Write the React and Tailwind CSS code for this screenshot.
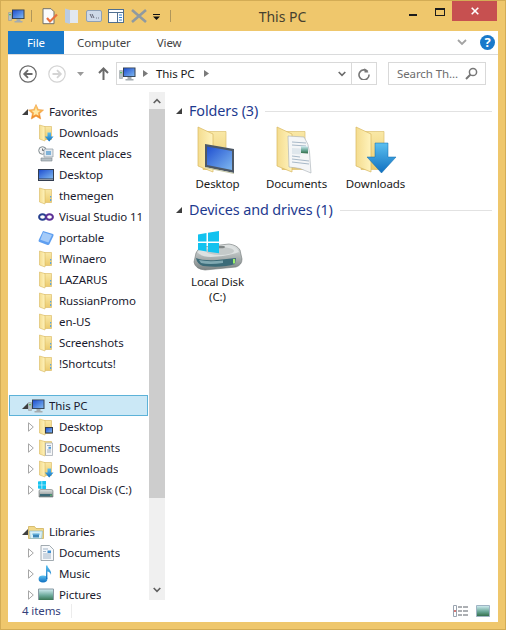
import React from 'react';

const Defs = () => (
  <svg className="absolute w-0 h-0">
    <defs>
      <linearGradient id="fold" x1="0" y1="0" x2="1" y2="0">
        <stop offset="0" stopColor="#f4dc8e" />
        <stop offset="1" stopColor="#fff3bd" />
      </linearGradient>
      <linearGradient id="back" x1="0" y1="0" x2="0" y2="1">
        <stop offset="0" stopColor="#f9e8a6" />
        <stop offset="1" stopColor="#eccb6e" />
      </linearGradient>
      <linearGradient id="scr" x1="0" y1="0" x2="1" y2="1">
        <stop offset="0" stopColor="#1f4fd0" />
        <stop offset="1" stopColor="#7fb8f0" />
      </linearGradient>
      <linearGradient id="arrow" x1="0" y1="0" x2="0" y2="1">
        <stop offset="0" stopColor="#5cc0f0" />
        <stop offset="1" stopColor="#0f6fc0" />
      </linearGradient>
      <linearGradient id="star" x1="0" y1="0" x2="0" y2="1">
        <stop offset="0" stopColor="#ffd87a" />
        <stop offset="1" stopColor="#f0801c" />
      </linearGradient>
      <linearGradient id="disk" x1="0" y1="0" x2="0" y2="1">
        <stop offset="0" stopColor="#dfe3e3" />
        <stop offset="1" stopColor="#7c8484" />
      </linearGradient>
      <linearGradient id="pic" x1="0" y1="0" x2="0" y2="1">
        <stop offset="0" stopColor="#d4eef4" />
        <stop offset="0.55" stopColor="#6aa898" />
        <stop offset="1" stopColor="#2f6b45" />
      </linearGradient>
    </defs>
  </svg>
);

const Folder = ({ children }) => (
  <svg width="16" height="18" viewBox="0 0 16 18" className="shrink-0">
    <path d="M6 2.5h7.5v13H6z" fill="url(#back)" stroke="#d8b65c" strokeWidth="0.6" />
    <path d="M1.5 1 L7 2.6 V17 L1.5 15z" fill="url(#fold)" stroke="#d9b860" strokeWidth="0.6" />
    {children}
  </svg>
);

const PlainFolder = () => (
  <Folder>
    <path d="M12 9h1.2v1.4H12zM12 12h1.2v2H12z" fill="#5aa6e0" />
  </Folder>
);

const FolderDown = () => (
  <Folder>
    <path d="M9.5 8.5h3.5v4h2.6L11.2 17.5 6.8 12.5h2.7z" fill="url(#arrow)" />
  </Folder>
);

const FolderDesk = () => (
  <Folder>
    <path d="M7 9h8v6.5H7z" fill="#333d4c" />
    <path d="M8 10h6v4.4H8z" fill="url(#scr)" />
  </Folder>
);

const FolderDoc = () => (
  <Folder>
    <path d="M7.5 4h7v12.5h-7z" fill="#f6f7f8" stroke="#8c949c" strokeWidth="0.6" />
    <path d="M9 6.5h4M9 11h4M9 13h4" stroke="#8a9aae" strokeWidth="0.8" />
    <path d="M10.5 7.8h2.5v2h-2.5z" fill="#4f9ad8" />
  </Folder>
);

const Pc = ({ className = '' }) => (
  <svg width="17" height="14" viewBox="0 0 17 14" className={`shrink-0 ${className}`}>
    <path d="M0.5 3.5h3v8h-3z" fill="#b8c0c4" stroke="#8c9498" strokeWidth="0.5" />
    <path d="M1.2 5h1.6v1.2H1.2z" fill="#3fc04c" />
    <path d="M4 0.5h12.5v9.5H4z" fill="#34404e" />
    <path d="M5 1.3h10.5v7.8H5z" fill="url(#scr)" />
    <path d="M8.5 10h4v2h2v1.5h-8V12h2z" fill="#a4acb0" />
  </svg>
);

const Star = () => (
  <svg width="16" height="16" viewBox="0 0 16 16" className="shrink-0">
    <path d="M8 0.5l2.3 5 5.2.6-3.9 3.5 1.1 5.4L8 12.2 3.3 15l1.1-5.4L.5 6.1l5.2-.6z" fill="url(#star)" stroke="#ef9a3c" strokeWidth="0.6" />
    <path d="M8 3.5l1.3 3 3 .3-2.2 2 .6 3L8 10.2l-2.7 1.6.6-3-2.2-2 3-.3z" fill="#ffe9a6" />
  </svg>
);

const Recent = () => (
  <svg width="16" height="16" viewBox="0 0 16 16" className="shrink-0">
    <circle cx="4.5" cy="4.5" r="3.8" fill="#f2f2f2" stroke="#7f8a8f" />
    <path d="M4.5 2.5v2h2" stroke="#4b5358" fill="none" strokeWidth="0.8" />
    <path d="M6 3h9v8H6z" fill="#e2e9ef" stroke="#8b979f" strokeWidth="0.7" />
    <path d="M8 5h5v4H8z" fill="#7fb2d8" />
    <path d="M3 12h11v3H3z" fill="#b7c0c6" stroke="#79848a" strokeWidth="0.6" />
  </svg>
);

const DeskSmall = () => (
  <svg width="16" height="14" viewBox="0 0 16 14" className="shrink-0">
    <path d="M0 1h16v12H0z" fill="#333d4f" />
    <path d="M1 2h14v8.5H1z" fill="url(#scr)" />
    <path d="M1 11h14v1H1z" fill="#8a94a2" />
  </svg>
);

const Vs = () => (
  <svg width="16" height="10" viewBox="0 0 16 10" className="shrink-0">
    <ellipse cx="4.5" cy="5" rx="3.4" ry="2.8" fill="none" stroke="#27408f" strokeWidth="2" />
    <ellipse cx="11.5" cy="5" rx="3.4" ry="2.8" fill="none" stroke="#5b2f96" strokeWidth="2" />
  </svg>
);

const Portable = () => (
  <svg width="16" height="16" viewBox="0 0 16 16" className="shrink-0">
    <path d="M5 1 L15 4 Q16 4.5 15.4 6 L11.5 14 Q11 15.4 9.5 15 L1.5 12 Q0 11.4 .7 10z" fill="#5f9ff0" />
    <path d="M5.2 2.2 L14 5 L10.4 12.5 L2.4 9.8z" fill="#a5cbf8" />
  </svg>
);

const Win = ({ s = 8 }) => (
  <svg width={s} height={s} viewBox="0 0 8 8" className="absolute top-0 left-0">
    <path d="M0 .6 3.6 0v3.7H0zM4.2 0 8 -.1v3.8H4.2zM0 4.3h3.6V8L0 7.5zM4.2 4.3H8V8.2L4.2 8z" fill="#16c4f0" />
  </svg>
);

const DiskSmall = () => (
  <span className="relative w-[16px] h-[18px] shrink-0">
    <Win s={8} />
    <svg width="16" height="18" viewBox="0 0 16 18" className="block">
      <path d="M1 10 Q1 8.5 3 8.5h10Q15 8.5 15 10v6H1z" fill="url(#disk)" stroke="#6a7272" strokeWidth="0.6" />
      <path d="M2 13h12v2.3H2z" fill="#3c6a78" />
      <path d="M12.5 13.5h1v1.4h-1z" fill="#7be36a" />
    </svg>
  </span>
);

const LibDoc = () => (
  <svg width="14" height="16" viewBox="0 0 14 16" className="shrink-0 ml-[1px]">
    <path d="M1 .5h8.5l4 4v11H1z" fill="#f7f9fb" stroke="#8b959d" strokeWidth="0.8" />
    <path d="M3 4h5M3 6.5h3M3 9h8M3 11h8M3 13h8" stroke="#8aa2bb" strokeWidth="0.8" />
    <path d="M7.5 5.5h3.5v2.5H7.5z" fill="#3d8fd0" />
  </svg>
);

const Music = () => (
  <svg width="16" height="18" viewBox="0 0 16 18" className="shrink-0">
    <ellipse cx="5" cy="14" rx="4.4" ry="3.4" fill="url(#arrow)" />
    <path d="M8 14V0.5h1.4C10 4 14 5 13 10 12.6 7.5 11 6.6 9.4 6.4V14z" fill="url(#arrow)" />
  </svg>
);

const Pics = () => (
  <svg width="16" height="14" viewBox="0 0 16 14" className="shrink-0">
    <path d="M.5 1h15v12H.5z" fill="url(#pic)" stroke="#8a9aa4" />
  </svg>
);

const Libraries = () => (
  <svg width="16" height="16" viewBox="0 0 16 16" className="shrink-0">
    <path d="M.5 2.5h6l1.5 2h7.5v10H.5z" fill="#f2d98a" stroke="#c9a94e" strokeWidth="0.7" />
    <path d="M1.5 7h13l-.8 7.5H2.3z" fill="#d8f0f7" stroke="#7fb3c9" strokeWidth="0.6" />
    <path d="M5 10.5h6v3H5z" fill="#3c86b8" />
    <path d="M4.5 9.5h7v1.4h-7z" fill="#5aa9d6" />
  </svg>
);

const Open = () => (
  <svg width="6" height="6" viewBox="0 0 6 6" className="shrink-0">
    <path d="M6 0v6H0z" fill="#3f3f3f" />
  </svg>
);

const Closed = () => (
  <svg width="6" height="10" viewBox="0 0 6 10" className="shrink-0">
    <path d="M.5 .8 5.3 5 .5 9.2z" fill="#fff" stroke="#a6a6a6" />
  </svg>
);

const Top = ({ icon, text, open = true, selected }) => (
  <div className={`flex items-center h-[21px] ${selected ? 'bg-[#cbe8f6] border border-[#5cb2d8] ml-[1px] mr-[1px] pl-[11px]' : 'pl-[13px]'}`}>
    <span className="w-[7px] flex justify-center">{open && <Open />}</span>
    <span className="w-[16px] flex justify-center">{icon}</span>
    <span className="ml-[5px] truncate">{text}</span>
  </div>
);

const Sub = ({ icon, text, arrow }) => (
  <div className="flex items-center h-[21px] pl-[20px]">
    <span className="w-[10px] flex justify-start">{arrow && <Closed />}</span>
    <span className="w-[16px] flex justify-center">{icon}</span>
    <span className="ml-[5px] truncate">{text}</span>
  </div>
);

const favorites = [
  [<FolderDown />, 'Downloads'],
  [<Recent />, 'Recent places'],
  [<DeskSmall />, 'Desktop'],
  [<PlainFolder />, 'themegen'],
  [<Vs />, 'Visual Studio 11'],
  [<Portable />, 'portable'],
  [<PlainFolder />, '!Winaero'],
  [<PlainFolder />, 'LAZARUS'],
  [<PlainFolder />, 'RussianPromo'],
  [<PlainFolder />, 'en-US'],
  [<PlainFolder />, 'Screenshots'],
  [<PlainFolder />, '!Shortcuts!'],
];

const BigFolder = ({ children }) => (
  <svg width="48" height="48" viewBox="5 0 48 48" className="block">
    <path d="M14 5.5h23v38H14z" fill="url(#back)" stroke="#dcc070" strokeWidth="0.7" />
    <path d="M9 1 L24 8 V46 L9 40z" fill="url(#fold)" stroke="#d9b860" strokeWidth="0.7" />
    {children}
  </svg>
);

const BigDesk = () => (
  <BigFolder>
    <path d="M16 18 L45 23 L45 47 L16 41z" fill="#4d5866" />
    <path d="M18 20.5 L43 25 L43 44 L18 39z" fill="url(#scr)" />
    <path d="M16 41 L45 47 L45 48 L16 42z" fill="#c6c8a8" />
  </BigFolder>
);

const BigDoc = () => (
  <BigFolder>
    <path d="M20 10 L36 11 Q41 18 41.5 26 L43 47 Q32 41 21 41z" fill="#f4f6f7" stroke="#a5adb3" strokeWidth="0.6" />
    <path d="M24 16l14 1M24 19l14 1M24 33l17 2M24 36l17 2M24 30l8 1" stroke="#93a8bb" strokeWidth="0.8" />
    <path d="M24 22l9 .5v6l-9-.5z" fill="#dfe7ec" />
    <path d="M33 20l7 .5v7l-7-.5z" fill="url(#pic)" />
  </BigFolder>
);

const BigDown = () => (
  <BigFolder>
    <path d="M28 18h13v14h8L34.5 48 20 32h8z" transform="translate(0 -1)" fill="url(#arrow)" stroke="#0f6aad" strokeWidth="0.5" />
  </BigFolder>
);

const BigDisk = () => (
  <svg width="50" height="41" viewBox="0 0 50 41" className="block">
    <path d="M3 22 Q4 18 10 16 L36 13 Q44 14 47 19 L49 28 Q49 34 43 36 L12 39 Q2 38 1 31z" fill="url(#disk)" stroke="#6f7676" strokeWidth="0.6" />
    <path d="M4 21 Q8 16 20 15 L37 14 Q44 16 46 21 Q36 25 18 26 Q8 26 4 21z" fill="#dde1e1" />
    <ellipse cx="27" cy="20" rx="14" ry="4" fill="#c4c9c9" />
    <ellipse cx="28" cy="16" rx="4" ry="1.3" fill="#7f8585" />
    <path d="M3 27 Q10 30 24 29 L43 27 L42 33 Q30 37 10 35 Q4 33 3 27z" fill="#3b6b78" />
    <path d="M6 29 Q14 31 30 29.5 L30 32 Q16 34 8 32z" fill="#80a9b2" />
    <path d="M40 28h2v4.5h-2z" fill="#9df06a" />
    <g fill="#12c2ef">
      <path d="M5 3.5 L13.5 2 V10.5 H5z" />
      <path d="M15 1.8 L26 0 V10.5 H15z" />
      <path d="M5 12 H13.5 V20.5 L5 19z" />
      <path d="M15 12 H26 V22.3 L15 20.8z" />
    </g>
  </svg>
);

const Item = ({ icon, label }) => (
  <div className="w-[79px] flex flex-col items-center text-center text-[#1a1a1a] leading-[15px]">
    {icon}
    <span className="mt-[2px] w-[66px]">{label}</span>
  </div>
);

const GroupHead = ({ text }) => (
  <div className="flex items-center h-[22px] pl-[5px]">
    <Open />
    <span className="ml-[7px] text-[14.4px] tracking-[-0.1px] text-[#1e3a8f]">{text}</span>
    <span className="ml-[7px] flex-1 h-px bg-[#e2e2e2]" />
  </div>
);

export default function App() {
  return (
    <div className="relative w-[506px] h-[630px] flex flex-col bg-[#efc76c] border border-[#d3ac55] overflow-hidden text-[11.5px] tracking-[-0.1px] text-[#1a1a2e] font-['Noto_Sans',sans-serif]">
      <Defs />
      {/* title bar */}
      <div className="flex h-[30px] shrink-0 items-start">
        <div className="flex items-center h-[30px] w-[174px] shrink-0 pl-[7px]">
          <Pc />
          <span className="ml-[6px] w-px h-[12px] bg-[#b0965a]" />
          <svg width="16" height="17" viewBox="0 0 16 17" className="ml-[10px]">
            <path d="M1 .7h8l3 3v12H1z" fill="#fbfbfb" stroke="#70706a" />
            <path d="M5 10l3 3.5 7-7" fill="none" stroke="#e86f3c" strokeWidth="2.2" />
          </svg>
          <svg width="14" height="16" viewBox="0 0 14 16" className="ml-[7px]">
            <path d="M5 2h8v13H5z" fill="#e2e8ef" />
            <path d="M0 .5l5 1.5v14L0 14.5z" fill="#b9cbe3" />
          </svg>
          <svg width="16" height="12" viewBox="0 0 16 12" className="ml-[7px]">
            <rect x=".5" y=".5" width="15" height="11" rx="1.5" fill="#ced9e8" stroke="#8fa0b5" />
            <path d="M4 4l2 4M6 4l2 4M10 8h.8M12 8h.8" stroke="#445" strokeWidth="0.8" />
          </svg>
          <svg width="16" height="14" viewBox="0 0 16 14" className="ml-[6px]">
            <rect x=".5" y=".5" width="15" height="13" fill="#fdfdfd" stroke="#4f6f90" />
            <path d="M.5 3.5h15M9.5 3.5v10" stroke="#4f6f90" />
            <path d="M11 6h3M11 8.5h3M11 11h3" stroke="#2e7fd0" />
          </svg>
          <svg width="16" height="14" viewBox="0 0 16 14" className="ml-[7px]">
            <path d="M1 1l14 12M15 1L1 13" stroke="#8f9aa0" strokeWidth="2.6" />
          </svg>
          <svg width="7" height="6" viewBox="0 0 7 6" className="ml-[6px] mt-[2px]">
            <path d="M0 0h7v1H0zM0 2.5h7L3.5 6z" fill="#111" />
          </svg>
          <span className="ml-[10px] w-px h-[12px] bg-[#b0965a]" />
        </div>
        <div className="flex-1 h-[30px] flex items-center justify-center text-[14px] tracking-normal text-[#46412f] pr-[8px]">This PC</div>
        <div className="flex items-start shrink-0 w-[107px]">
          <span className="w-[8px] h-[2px] bg-[#1c1c1c] mt-[13px] ml-[11px]" />
          <span className="w-[10px] h-[8px] border border-t-2 border-[#1c1c1c] mt-[7px] ml-[18px]" />
          <span className="w-[45px] h-[20px] ml-[7px] bg-[#c75050] flex items-center justify-center text-white">
            <svg width="8" height="8" viewBox="0 0 8 8">
              <path d="M.7.7l6.6 6.6M7.3.7L.7 7.3" stroke="#fff" strokeWidth="1.6" />
            </svg>
          </span>
        </div>
      </div>

      {/* window body */}
      <div className="flex-1 mx-[7px] mb-[7px] min-h-0 bg-white flex flex-col">
        <div className="h-[24px] shrink-0 flex items-stretch border-b border-[#dadbdc] text-[#444444]">
          <span className="w-[56px] bg-[#1979ca] text-white flex items-center justify-center">File</span>
          <span className="ml-[13px] flex items-center">Computer</span>
          <span className="ml-[26px] flex items-center">View</span>
          <span className="flex-1 flex items-center justify-end pr-[3px]">
            <svg width="10" height="7" viewBox="0 0 10 7" className="mr-[13px]">
              <path d="M1 1l4 4 4-4" fill="none" stroke="#a3a3a3" strokeWidth="1.8" />
            </svg>
            <span className="w-[15px] h-[15px] rounded-full bg-[#1979ca] text-white text-[13px] font-bold flex items-center justify-center leading-none">?</span>
          </span>
        </div>

        {/* address row */}
        <div className="h-[37px] shrink-0 flex items-center">
          <svg width="18" height="18" viewBox="0 0 18 18" className="ml-[11px]">
            <circle cx="9" cy="9" r="8.2" fill="none" stroke="#6a6a6a" strokeWidth="1.2" />
            <path d="M13.5 9H5.5M9 5.2 5.2 9 9 12.8" fill="none" stroke="#6a6a6a" strokeWidth="1.8" />
          </svg>
          <svg width="18" height="18" viewBox="0 0 18 18" className="ml-[11px]">
            <circle cx="9" cy="9" r="8.2" fill="none" stroke="#d4d4d4" strokeWidth="1.2" />
            <path d="M4.5 9h8M9 5.2 12.8 9 9 12.8" fill="none" stroke="#d4d4d4" strokeWidth="1.8" />
          </svg>
          <svg width="7" height="4" viewBox="0 0 7 4" className="ml-[11px]">
            <path d="M0 0h7L3.5 4z" fill="#9a9a9a" />
          </svg>
          <svg width="11" height="13" viewBox="0 0 11 13" className="ml-[14px]">
            <path d="M5.5 13V2M1 6l4.5-4.5L10 6" fill="none" stroke="#6a6a6a" strokeWidth="2" />
          </svg>
          <div className="ml-[7px] w-[261px] h-[23px] border border-[#d9d9d9] flex items-center">
            <Pc className="ml-[2px]" />
            <svg width="5" height="7" viewBox="0 0 5 7" className="ml-[7px]">
              <path d="M0 0l5 3.5L0 7z" fill="#7a7a7a" />
            </svg>
            <span className="ml-[8px] text-[#1a1a1a]">This PC</span>
            <svg width="5" height="7" viewBox="0 0 5 7" className="ml-[9px]">
              <path d="M0 0l5 3.5L0 7z" fill="#7a7a7a" />
            </svg>
            <span className="flex-1" />
            <svg width="8" height="6" viewBox="0 0 8 6" className="mr-[5px]">
              <path d="M.7 1l3.3 3.4L7.3 1" fill="none" stroke="#6a6a6a" strokeWidth="1.6" />
            </svg>
            <span className="w-[25px] h-full border-l border-[#d9d9d9] flex items-center justify-center">
              <svg width="12" height="12" viewBox="0 0 12 12">
                <path d="M9.8 3.6A5 5 0 1 0 11 6.5" fill="none" stroke="#777" strokeWidth="1.6" />
                <path d="M7 0v4.5h4z" fill="#777" transform="translate(-.5 0)" />
              </svg>
            </span>
          </div>
          <div className="ml-[11px] w-[98px] h-[23px] border border-[#d9d9d9] flex items-center pl-[8px] pr-[7px] text-[#6d6d6d]">
            <span className="flex-1 whitespace-nowrap">Search Th...</span>
            <svg width="13" height="13" viewBox="0 0 13 13">
              <circle cx="8" cy="5" r="3.6" fill="none" stroke="#777" strokeWidth="1.5" />
              <path d="M5.5 7.5 1 12" stroke="#777" strokeWidth="2" />
            </svg>
          </div>
        </div>

        {/* panes */}
        <div className="flex-1 min-h-0 flex">
          <div className="w-[141px] shrink-0 overflow-hidden pt-[9px]">
            <Top icon={<Star />} text="Favorites" />
            {favorites.map(([icon, text]) => (
              <Sub key={text} icon={icon} text={text} />
            ))}
            <div className="h-[21px]" />
            <Top icon={<Pc />} text="This PC" selected />
            <Sub arrow icon={<FolderDesk />} text="Desktop" />
            <Sub arrow icon={<FolderDoc />} text="Documents" />
            <Sub arrow icon={<FolderDown />} text="Downloads" />
            <Sub arrow icon={<DiskSmall />} text="Local Disk (C:)" />
            <div className="h-[21px]" />
            <Top icon={<Libraries />} text="Libraries" />
            <Sub arrow icon={<LibDoc />} text="Documents" />
            <Sub arrow icon={<Music />} text="Music" />
            <Sub arrow icon={<Pics />} text="Pictures" />
          </div>

          <div className="w-[16px] shrink-0 flex flex-col bg-[#f0f0f0]">
            <div className="h-[17px] flex items-center justify-center">
              <svg width="8" height="6" viewBox="0 0 8 6">
                <path d="M.7 5 4 1.6 7.3 5" fill="none" stroke="#606060" strokeWidth="1.6" />
              </svg>
            </div>
            <div className="h-[389px] bg-[#cdcdcd]" />
            <div className="flex-1" />
            <div className="h-[20px] flex items-center justify-center">
              <svg width="8" height="6" viewBox="0 0 8 6">
                <path d="M.7 1 4 4.4 7.3 1" fill="none" stroke="#606060" strokeWidth="1.6" />
              </svg>
            </div>
          </div>

          <div className="flex-1 min-w-0 pr-[6px] pl-[6px] pt-[8px]">
            <GroupHead text="Folders (3)" />
            <div className="flex mt-[4px] pl-[7px]">
              <Item icon={<BigDesk />} label="Desktop" />
              <Item icon={<BigDoc />} label="Documents" />
              <Item icon={<BigDown />} label="Downloads" />
            </div>
            <div className="mt-[8px]">
              <GroupHead text="Devices and drives (1)" />
            </div>
            <div className="flex mt-[10px] pl-[7px]">
              <Item icon={<BigDisk />} label="Local Disk (C:)" />
            </div>
          </div>
        </div>

        {/* status bar */}
        <div className="h-[22px] shrink-0 flex items-center pl-[14px] pr-[8px] text-[#33407a]">
          <span>4 items</span>
          <span className="ml-[10px] w-px h-[14px] bg-[#ececec]" />
          <span className="flex-1" />
          <svg width="16" height="12" viewBox="0 0 16 12">
            <path d="M.5.5h3v11h-3z" fill="#fff" stroke="#9aa4b0" />
            <path d="M1.3 5h1.4v2H1.3z" fill="#c0403c" />
            <path d="M5 2h4M10 2h5M5 6h4M10 6h5M5 10h4M10 10h5" stroke="#5a6068" />
          </svg>
          <svg width="14" height="12" viewBox="0 0 14 12" className="ml-[7px]">
            <path d="M.5.5h13v11H.5z" fill="url(#pic)" stroke="#9fb4c4" />
          </svg>
        </div>
      </div>
    </div>
  );
}
